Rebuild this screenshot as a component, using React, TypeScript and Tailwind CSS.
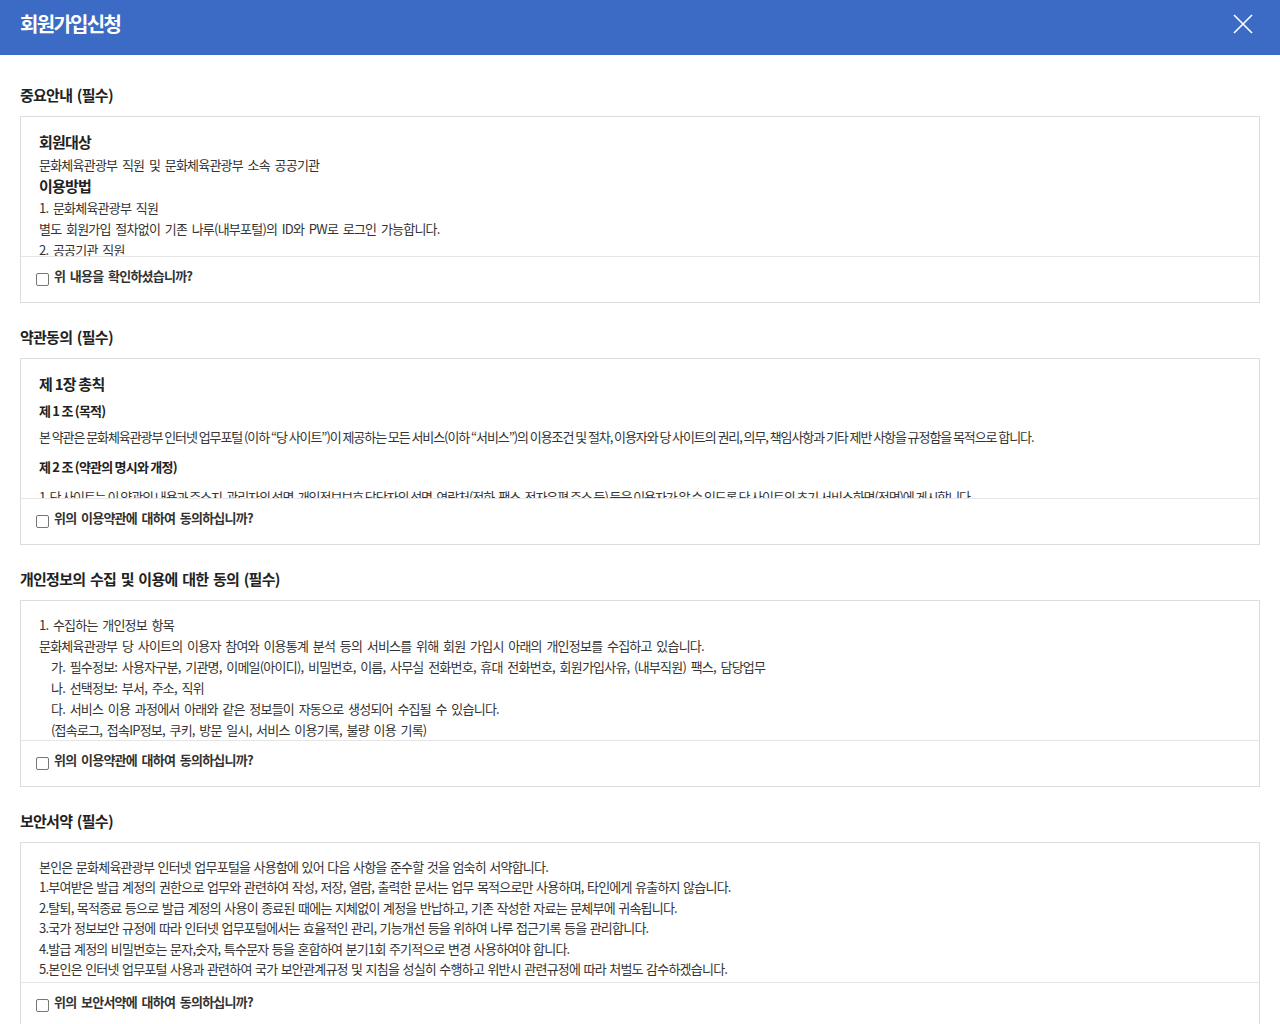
import { ReactNode } from 'react';

const font = { fontFamily: '"Noto Sans CJK KR", "Noto Sans", sans-serif' };

function Section({
  title,
  label,
  children,
}: {
  title: string;
  label: string;
  children: ReactNode;
}) {
  return (
    <section className="mt-[24px] first:mt-0">
      <h2 className="text-[15px] leading-[20px] font-bold text-[#222] tracking-[-0.05em] [word-spacing:2px]">
        {title}
      </h2>
      <div className="mt-[11px] border border-[#dcdcdc]">
        <div className="h-[139px] overflow-hidden px-[18px] text-[13px] text-[#333] tracking-[-0.06em]">
          {children}
        </div>
        <label className="flex h-[46px] items-start border-t border-[#e6e6e6] pl-[15px] pt-[9px]">
          <span className="mt-[7px] h-[13px] w-[13px] rounded-[2px] border border-[#767676] bg-white" />
          <span className="ml-[5px] text-[13px] leading-[20px] font-bold text-[#333] tracking-[-0.06em] [word-spacing:2.5px]">
            {label}
          </span>
        </label>
      </div>
    </section>
  );
}

export default function App() {
  return (
    <div className="min-h-screen bg-white" style={font}>
      <header className="flex h-[55px] items-center justify-between bg-[#3b6bc4] pb-[8px] pl-[20px] pr-[27px]">
        <h1 className="text-[20px] font-bold text-white tracking-[-0.085em]">회원가입신청</h1>
        <svg width="20" height="20" viewBox="0 0 20 20" stroke="white" strokeWidth="1.6" fill="none">
          <path d="M1 1 L19 19 M19 1 L1 19" />
        </svg>
      </header>

      <main className="px-[20px] pt-[30px]">
        <Section title="중요안내 (필수)" label="위 내용을 확인하셨습니까?">
          <div className="pt-[14px] leading-[21px] [word-spacing:2.5px]">
            <p className="text-[15px] font-bold text-[#222] leading-[22.5px] [word-spacing:0px]">회원대상</p>
            <p>문화체육관광부 직원 및 문화체육관광부 소속 공공기관</p>
            <p className="text-[15px] font-bold text-[#222] leading-[22.5px] [word-spacing:0px]">이용방법</p>
            <p>1. 문화체육관광부 직원</p>
            <p>별도 회원가입 절차없이 기존 나루(내부포털)의 ID와 PW로 로그인 가능합니다.</p>
            <p>2. 공공기관 직원</p>
            <p>회원가입 신청 후 관리자 승인을 거쳐 이용 가능합니다.</p>
          </div>
        </Section>

        <Section title="약관동의 (필수)" label="위의 이용약관에 대하여 동의하십니까?">
          <div className="pt-[14px]">
            <p className="text-[15px] font-bold text-[#222] leading-[22px]">제 1장 총칙</p>
            <p className="mt-[5px] font-bold text-[#222] leading-[21px]">제 1 조 (목적)</p>
            <p className="mt-[5px] leading-[21px] tracking-[-0.083em]">
              본 약관은 문화체육관광부 인터넷 업무포털 (이하 “당 사이트”)이 제공하는 모든 서비스(이하 “서비스”)의 이용조건 및 절차, 이용자와 당 사이트의 권리, 의무, 책임사항과 기타 제반 사항을 규정함을 목적으로 합니다.
            </p>
            <p className="mt-[9px] font-bold text-[#222] leading-[21px]">제 2 조 (약관의 명시와 개정)</p>
            <p className="mt-[9px] leading-[21px] tracking-[-0.083em]">
              1. 당 사이트는 이 약관의 내용과 주소지, 관리자의 성명, 개인정보보호 담당자의 성명, 연락처(전화, 팩스, 전자우편 주소 등) 등을 이용자가 알 수 있도록 당 사이트의 초기 서비스화면(전면)에 게시합니다.
            </p>
          </div>
        </Section>

        <Section title="개인정보의 수집 및 이용에 대한 동의 (필수)" label="위의 이용약관에 대하여 동의하십니까?">
          <div className="pt-[13px] leading-[21px] [word-spacing:2.5px]">
            <p>1. 수집하는 개인정보 항목</p>
            <p>문화체육관광부 당 사이트의 이용자 참여와 이용통계 분석 등의 서비스를 위해 회원 가입시 아래의 개인정보를 수집하고 있습니다.</p>
            <p className="pl-[12px]">가. 필수정보: 사용자구분, 기관명, 이메일(아이디), 비밀번호, 이름, 사무실 전화번호, 휴대 전화번호, 회원가입사유, (내부직원) 팩스, 담당업무</p>
            <p className="pl-[12px]">나. 선택정보: 부서, 주소, 직위</p>
            <p className="pl-[12px]">다. 서비스 이용 과정에서 아래와 같은 정보들이 자동으로 생성되어 수집될 수 있습니다.</p>
            <p className="pl-[12px]">(접속로그, 접속IP정보, 쿠키, 방문 일시, 서비스 이용기록, 불량 이용 기록)</p>
            <p>2. 개인정보의 수집 및 이용목적</p>
          </div>
        </Section>

        <Section title="보안서약 (필수)" label="위의 보안서약에 대하여 동의하십니까?">
          <div className="pt-[14px] leading-[20.4px] [word-spacing:1.2px]">
            <p>본인은 문화체육관광부 인터넷 업무포털을 사용함에 있어 다음 사항을 준수할 것을 엄숙히 서약합니다.</p>
            <p>1.부여받은 발급 계정의 권한으로 업무와 관련하여 작성, 저장, 열람, 출력한 문서는 업무 목적으로만 사용하며, 타인에게 유출하지 않습니다.</p>
            <p>2.탈퇴, 목적종료 등으로 발급 계정의 사용이 종료된 때에는 지체없이 계정을 반납하고, 기존 작성한 자료는 문체부에 귀속됩니다.</p>
            <p>3.국가 정보보안 규정에 따라 인터넷 업무포털에서는 효율적인 관리, 기능개선 등을 위하여 나루 접근기록 등을 관리합니다.</p>
            <p>4.발급 계정의 비밀번호는 문자,숫자, 특수문자 등을 혼합하여 분기1회 주기적으로 변경 사용하여야 합니다.</p>
            <p>5.본인은 인터넷 업무포털 사용과 관련하여 국가 보안관계규정 및 지침을 성실히 수행하고 위반시 관련규정에 따라 처벌도 감수하겠습니다.</p>
          </div>
        </Section>
      </main>
    </div>
  );
}
